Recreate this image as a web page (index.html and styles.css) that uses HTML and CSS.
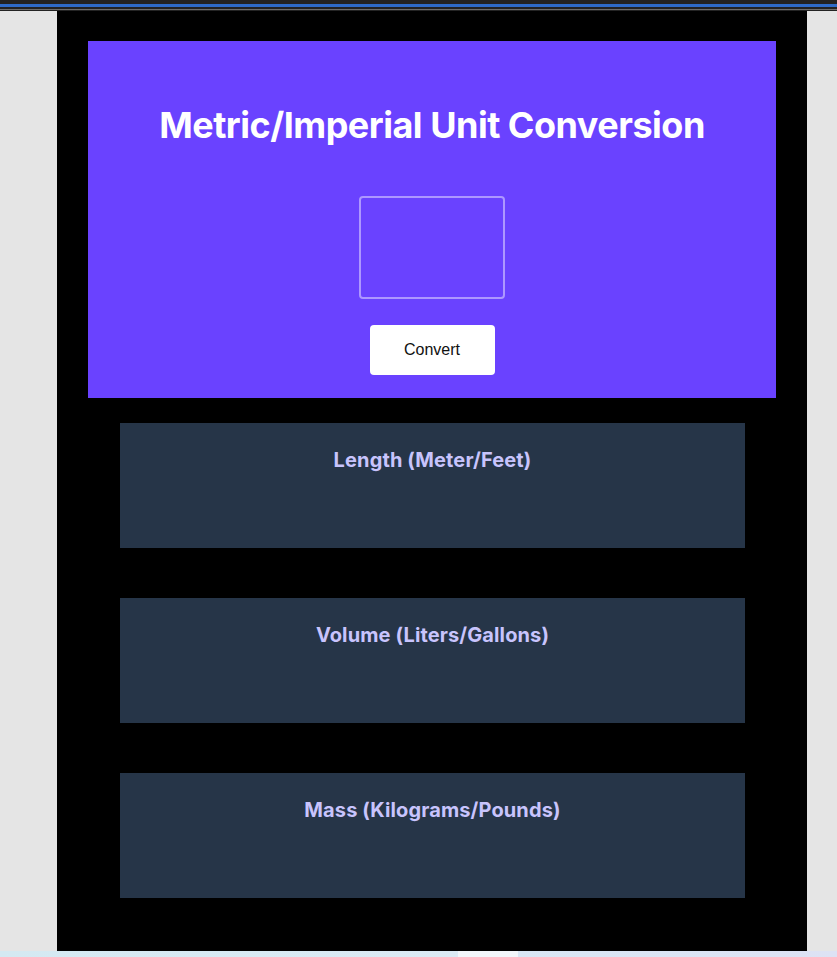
FILE: index.html
```html
<!DOCTYPE html>
<html lang="en">
<head>
<meta charset="utf-8">
<title>Metric/Imperial Unit Conversion</title>
<link rel="stylesheet" href="styles.css">
</head>
<body>
<div class="topbar"><div class="blue"></div><div class="grey"></div></div>
<div class="stage">
  <main class="app">
    <section class="hero">
      <h1>Metric/Imperial Unit Conversion</h1>
      <input class="num" type="text" aria-label="value">
      <button class="btn" type="button">Convert</button>
    </section>
    <section class="cards">
      <div class="card"><h2>Length (Meter/Feet)</h2></div>
      <div class="card"><h2>Volume (Liters/Gallons)</h2></div>
      <div class="card"><h2>Mass (Kilograms/Pounds)</h2></div>
    </section>
  </main>
</div>
<div class="taskbar"><div class="tb-a"></div><div class="tb-b"></div><div class="tb-c"></div></div>
</body>
</html>
```
FILE: styles.css
```css
html, body {
  margin: 0;
  padding: 0;
}
body {
  background: #e5e5e5;
  font-family: Inter, "Noto Sans", sans-serif;
  height: 957px;
  overflow: hidden;
}
.topbar {
  height: 11px;
  background: #232323;
  display: flex;
  flex-direction: column;
  padding-top: 4px;
  box-sizing: border-box;
}
.topbar .blue {
  height: 3px;
  background: #2e6bc9;
}
.topbar .grey {
  height: 1px;
  margin-top: 2px;
  background: #6d6d6d;
}
.stage {
  display: flex;
  padding-left: 57px;
}
.app {
  width: 750px;
  height: 940px;
  background: #000;
  padding: 30px 31px 0;
  box-sizing: border-box;
}
.hero {
  background: #6a42ff;
  height: 357px;
  display: flex;
  flex-direction: column;
  align-items: center;
  padding-top: 61px;
  box-sizing: border-box;
}
.hero h1 {
  margin: 0;
  color: #fff;
  font-size: 36px;
  font-weight: 700;
  line-height: 46px;
  letter-spacing: -0.5px;
}
.num {
  margin-top: 48px;
  width: 146px;
  height: 103px;
  box-sizing: border-box;
  background: transparent;
  border: 2px solid rgba(255, 255, 255, 0.45);
  border-radius: 4px;
  outline: none;
}
.btn {
  margin-top: 26px;
  width: 125px;
  height: 50px;
  background: #fff;
  border: none;
  border-radius: 4px;
  font-family: "Liberation Sans", Arial, sans-serif;
  font-size: 16px;
  color: #111;
}
.cards {
  display: flex;
  flex-direction: column;
  gap: 50px;
  padding: 25px 31px 0 32px;
}
.card {
  height: 125px;
  background: #263548;
  padding-top: 25px;
  box-sizing: border-box;
}
.card h2 {
  margin: 0;
  text-align: center;
  color: #c8c4fd;
  font-size: 20px;
  font-weight: 700;
  line-height: 24px;
  letter-spacing: 0.12px;
}
.taskbar {
  display: flex;
  height: 6px;
}
.tb-a {
  width: 458px;
  background: linear-gradient(90deg, #d4e9f2, #dbeaf4);
}
.tb-b {
  width: 60px;
  background: #f2f6fa;
}
.tb-c {
  flex: 1;
  background: linear-gradient(90deg, #d8e6f4, #dde2f4);
}
```
